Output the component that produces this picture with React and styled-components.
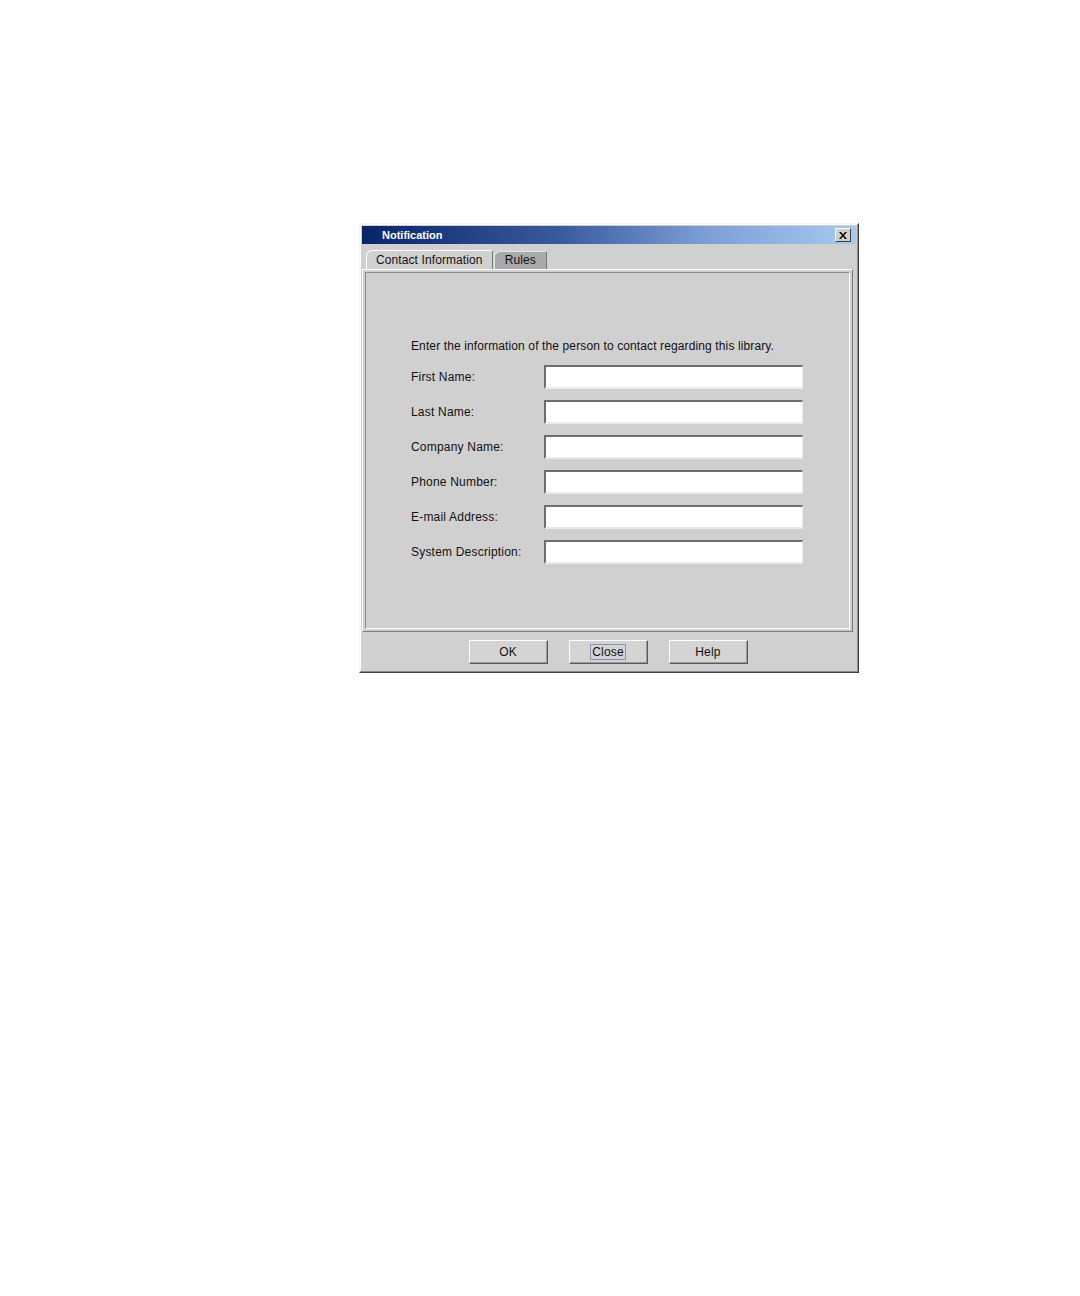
import React from 'react';
import styled, { createGlobalStyle } from 'styled-components';

const GlobalStyle = createGlobalStyle`
  body {
    margin: 0;
    background: #ffffff;
    font-family: "Liberation Sans", Arial, sans-serif;
  }
`;

const Page = styled.div`
  padding: 223px 0 0 359px;
  height: 1296px;
  box-sizing: border-box;
`;

const Frame = styled.div`
  width: 500px;
  height: 450px;
  box-sizing: border-box;
  background: #d0d0d0;
  border-top: 1px solid #f4f4f4;
  border-left: 1px solid #f4f4f4;
  border-right: 1px solid #404040;
  border-bottom: 1px solid #404040;
  box-shadow: inset -1px -1px 0 #8c8c8c, inset 1px 1px 0 #ffffff;
  padding: 2px 2px 0 2px;
  display: flex;
  flex-direction: column;
`;

const TitleBar = styled.div`
  height: 18px;
  display: flex;
  align-items: center;
  justify-content: space-between;
  padding: 0 5px 0 20px;
  background: linear-gradient(90deg, #0a246a 0%, #3a5a9e 40%, #7d9fd6 70%, #a6caf0 100%);
`;

const Title = styled.span`
  color: #ffffff;
  font-family: "Liberation Sans", Arial, sans-serif;
  font-weight: bold;
  font-size: 11px;
`;

const CloseBox = styled.button`
  width: 16px;
  height: 14px;
  padding: 0;
  display: flex;
  align-items: center;
  justify-content: center;
  background: #d4d0c8;
  border-top: 1px solid #ffffff;
  border-left: 1px solid #ffffff;
  border-right: 1px solid #404040;
  border-bottom: 1px solid #404040;
`;

const TabRow = styled.div`
  display: flex;
  align-items: flex-end;
  margin-top: 6px;
  padding-left: 4px;
  height: 19px;
`;

const Tab = styled.div`
  height: ${p => (p.active ? '19px' : '18px')};
  box-sizing: border-box;
  padding: 0 ${p => (p.active ? '9px' : '10px')} 1px;
  display: flex;
  align-items: center;
  font-size: 12px;
  letter-spacing: 0.1px;
  color: #111;
  background: ${p => (p.active ? '#d0d0d0' : '#a9a9a9')};
  border-top: 1px solid ${p => (p.active ? '#ffffff' : '#e6e6e6')};
  border-left: 1px solid ${p => (p.active ? '#ffffff' : '#e6e6e6')};
  border-right: 1px solid #7a7a7a;
  border-top-left-radius: 6px;
  margin-right: 1px;
`;

const Panel = styled.div`
  margin: 0 3px 0 0;
  height: 363px;
  box-sizing: border-box;
  border-top: 1px solid #ffffff;
  border-left: 1px solid #ffffff;
  border-right: 1px solid #7a7a7a;
  border-bottom: 1px solid #7a7a7a;
  padding: 2px;
`;

const PanelInner = styled.div`
  height: 100%;
  box-sizing: border-box;
  border-top: 1px solid #8c8c8c;
  border-left: 1px solid #8c8c8c;
  border-right: 1px solid #ffffff;
  border-bottom: 1px solid #ffffff;
  padding: 66px 0 0 45px;
`;

const Intro = styled.div`
  font-size: 12px;
  color: #111;
  letter-spacing: 0.12px;
  margin-bottom: 12px;
`;

const Form = styled.div`
  display: flex;
  flex-direction: column;
  gap: 11px;
`;

const Row = styled.div`
  display: flex;
  align-items: center;
`;

const Label = styled.label`
  width: 133px;
  font-size: 12px;
  letter-spacing: 0.2px;
  color: #111;
`;

const Field = styled.input`
  width: 259px;
  height: 24px;
  box-sizing: border-box;
  background: #ffffff;
  border-top: 2px solid #6e6e6e;
  border-left: 2px solid #6e6e6e;
  border-right: 1px solid #eaeaea;
  border-bottom: 2px solid #eaeaea;
  outline: none;
  padding: 0 3px;
  font-family: inherit;
  font-size: 12px;
`;

const ButtonBar = styled.div`
  flex: 1;
  display: flex;
  justify-content: center;
  gap: 21px;
  padding-top: 8px;
  padding-right: 2px;
`;

const Button = styled.button`
  width: 79px;
  height: 24px;
  box-sizing: border-box;
  background: #d4d4d4;
  border-top: 1px solid #ffffff;
  border-left: 1px solid #ffffff;
  border-right: 1px solid #5a5a5a;
  border-bottom: 1px solid #5a5a5a;
  box-shadow: inset -1px -1px 0 #9a9a9a;
  font-family: inherit;
  font-size: 12px;
  letter-spacing: 0.2px;
  color: #111;
  padding: 0;
  display: flex;
  align-items: center;
  justify-content: center;
`;

const Focus = styled.span`
  outline: 1px solid #9090c0;
  padding: 0 1px;
`;

const fields = [
  'First Name:',
  'Last Name:',
  'Company Name:',
  'Phone Number:',
  'E-mail Address:',
  'System Description:',
];

const App = () => {
  return (
    <Page>
      <GlobalStyle />
      <Frame>
        <TitleBar>
          <Title>Notification</Title>
          <CloseBox aria-label="Close">
            <svg width="8" height="7" viewBox="0 0 8 7">
              <path d="M0 0 L2 0 L4 2.5 L6 0 L8 0 L5 3.5 L8 7 L6 7 L4 4.5 L2 7 L0 7 L3 3.5 Z" fill="#000" />
            </svg>
          </CloseBox>
        </TitleBar>

        <TabRow>
          <Tab active>Contact Information</Tab>
          <Tab>Rules</Tab>
        </TabRow>

        <Panel>
          <PanelInner>
            <Intro>Enter the information of the person to contact regarding this library.</Intro>
            <Form>
              {fields.map(f => (
                <Row key={f}>
                  <Label>{f}</Label>
                  <Field type="text" />
                </Row>
              ))}
            </Form>
          </PanelInner>
        </Panel>

        <ButtonBar>
          <Button>OK</Button>
          <Button><Focus>Close</Focus></Button>
          <Button>Help</Button>
        </ButtonBar>
      </Frame>
    </Page>
  );
};

export default App;
